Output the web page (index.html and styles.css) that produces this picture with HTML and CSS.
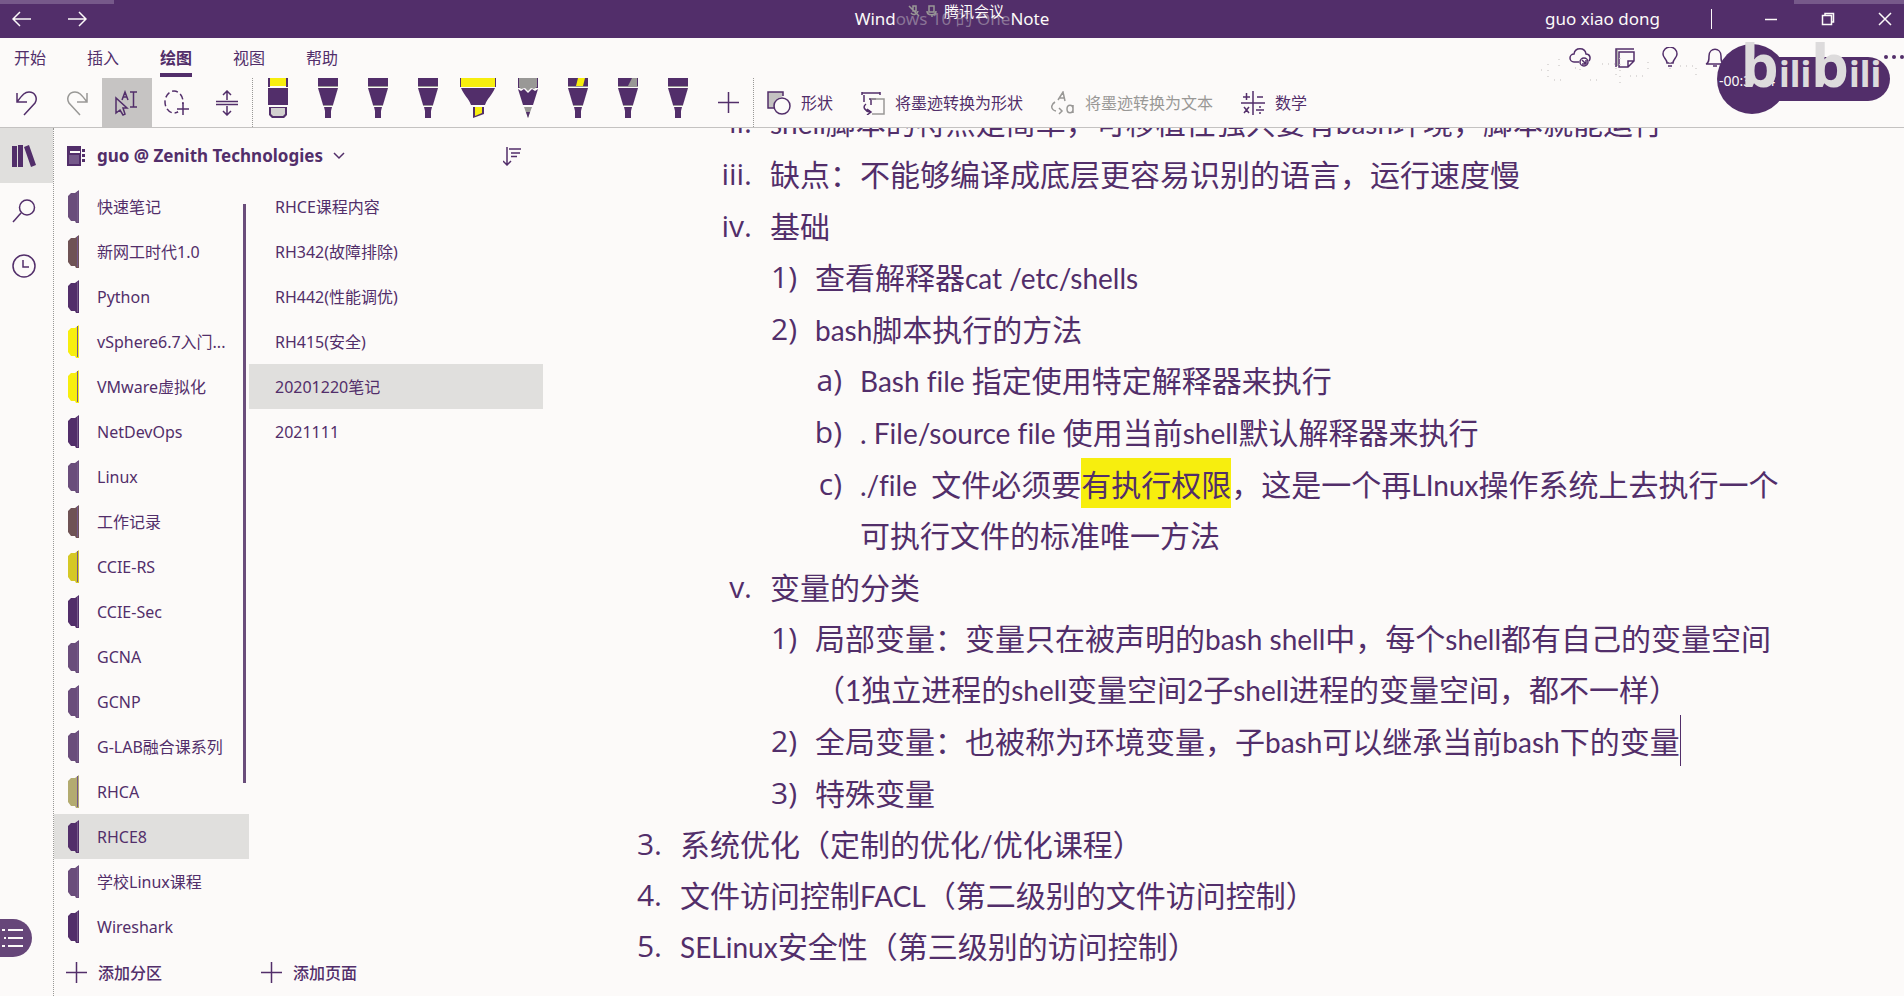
FILE: index.html
```
<!DOCTYPE html>
<html lang="zh-CN">
<head>
<meta charset="utf-8">
<title>Windows 10 的 OneNote</title>
<link rel="stylesheet" href="styles.css">
</head>
<body>
<svg class="defs" aria-hidden="true">
  <symbol id="pen" viewBox="0 0 20 40"><path class="cap" d="M0 0h20v8H0z"/><path class="line" d="M0 8h20v1H0z"/><path d="M0 10h20l-5 17H5z"/><path class="line" d="M5 27h10v1H5z"/><path d="M6 29h8l-1 4v7H7v-7z"/><path class="nib" d="M9 31h2v7H9z"/></symbol>
  <symbol id="tab" viewBox="0 0 12 33"><path d="M12 0v33H9l-1-2H4l-3-4V6l3-3h4z"/><path class="edge" d="M10 1h1v31h-1z"/></symbol>
  <symbol id="plus" viewBox="0 0 21 21"><path d="M10.500 0v21M0 10.500h21" fill="none" stroke="currentColor" stroke-width="1.500"/></symbol>
</svg>

<header class="titlebar">
  <nav class="history">
    <button aria-label="后退"><svg width="20" height="16" viewBox="0 0 20 16"><path d="M19 8H1M8 1L1 8l7 7"/></svg></button>
    <button aria-label="前进"><svg width="20" height="16" viewBox="0 0 20 16"><path d="M1 8h18M12 1l7 7-7 7"/></svg></button>
  </nav>
  <h1>Wind<span class="dim">ows 10 的 One</span>Note</h1>
  <div class="meeting">
    <svg width="32" height="12" viewBox="0 0 32 12"><path d="M2 1l10 10M4 8a4 4 0 0 0 7-2M6 1v5h3V1zM22 1h5v6h-5zM20 6c0 5 9 5 9 0M25 9v3"/></svg>
    <span>腾讯会议</span>
  </div>
  <div class="account">
    <span class="user">guo xiao dong</span>
    <i class="sep"></i>
    <button aria-label="最小化"><svg width="14" height="14" viewBox="0 0 14 14"><path d="M1 7.500h12"/></svg></button>
    <button aria-label="还原"><svg width="14" height="14" viewBox="0 0 14 14"><path d="M1.500 3.500h9v9h-9zM4 3V1.500h8.500V10H11"/></svg></button>
    <button aria-label="关闭"><svg width="14" height="14" viewBox="0 0 14 14"><path d="M1 1l12 12M13 1L1 13"/></svg></button>
  </div>
  <i class="strip left"></i><i class="strip right"></i>
</header>

<div class="tabs">
  <nav>
    <button>开始</button><button>插入</button><button class="active">绘图</button><button>视图</button><button>帮助</button>
  </nav>
  <div class="status">
    <button aria-label="同步"><svg width="22" height="22" viewBox="0 0 22 22"><path d="M10 15H5a4 4 0 0 1 0-8c1-7 11-7 12 0 4 0 5 4 3 7"/><circle cx="15" cy="15" r="4"/><path d="M13 13l4 4M17 13v4h-4"/></svg></button>
    <button aria-label="页面"><svg width="22" height="22" viewBox="0 0 22 22"><path class="faint" d="M3 3v16"/><path d="M2 20V2h18M5 20V5h15v9l-6 6zM14 20v-6h6"/></svg></button>
    <button aria-label="提示"><svg width="22" height="22" viewBox="0 0 22 22"><path d="M8 16c0-4-4-5-4-9a7 7 0 0 1 14 0c0 4-4 5-4 9zM9 19h4"/></svg></button>
    <button aria-label="通知"><svg width="22" height="22" viewBox="0 0 22 22"><path d="M2 17c3-1 3-4 3-8 0-9 12-9 12 0 0 4 0 7 3 8zM9 19h4"/></svg></button>
    <button class="more" aria-label="更多"><svg width="20" height="4" viewBox="0 0 20 4"><circle cx="2" cy="2" r="2"/><circle cx="10" cy="2" r="2"/><circle cx="18" cy="2" r="2"/></svg></button>
  </div>
  <svg class="specks" width="170" height="34" viewBox="0 0 170 34"><path d="M1 16h1M8 10v15M14 26h8M19 5v10M35 14h5v6M50 26h12M62 10h14v12M80 4v25M90 22h18M108 8v8M130 8v12M140 12h16v10"/></svg>
  <div class="badge">
    <i class="disc"></i><i class="bar"></i>
    <span class="clock">-00:3</span><span class="clock end">4</span>
    <span class="logo"><b>b</b>ili<b>b</b>ili</span>
  </div>
</div>

<div class="toolbar">
  <div class="tools">
    <button aria-label="撤消"><svg width="22" height="26" viewBox="0 0 22 26"><path d="M1 3v9h10M1 12C7 4 9 2 13 2c6 0 9 6 6 11L8 25"/></svg></button>
    <button aria-label="恢复" class="off"><svg width="22" height="26" viewBox="0 0 22 26"><path d="M21 3v9H11M21 12C15 4 13 2 9 2 3 2 0 8 3 13l11 12"/></svg></button>
    <button aria-label="选择文本" class="on"><svg width="26" height="26" viewBox="0 0 26 26"><path d="M2 8v15l4-3 3 5 2-1-2-6h4zM16 2h7M16 17h7M19.500 2v15M8 10l3-8 3 8M9 7h4"/></svg></button>
    <button aria-label="套索选择"><svg width="26" height="26" viewBox="0 0 26 26"><ellipse cx="10" cy="12" rx="9" ry="11" stroke-dasharray="6 3"/><path class="gap" d="M14 14h8v8h-8z"/><path d="M19 13v12M13 19h12"/></svg></button>
    <button aria-label="插入空间"><svg width="22" height="26" viewBox="0 0 22 26"><path d="M0 11.500h22M0 14.500h22M11 10V2M7 5l4-4 4 4M11 16v8M7 21l4 4 4-4"/></svg></button>
  </div>
  <div class="pens">
    <button aria-label="橡皮擦"><svg width="20" height="40" viewBox="0 0 20 40"><path class="yellow" d="M0 0h20v8H0z"/><path d="M0 0h2v9H0zM18 0h2v9h-2zM0 10h20v17H0zM1 29h18v8l-3 3H4l-3-3z"/><path class="soft" d="M3 30h14v6l-2 2H5l-2-2z"/></svg></button>
    <button aria-label="笔 1" class="gold"><svg width="20" height="40"><use href="#pen"/></svg></button>
    <button aria-label="笔 2" class="mist"><svg width="20" height="40"><use href="#pen"/></svg></button>
    <button aria-label="笔 3"><svg width="20" height="40"><use href="#pen"/></svg></button>
    <button aria-label="荧光笔"><svg width="36" height="40" viewBox="0 0 36 40"><path d="M0 0h36v9H0z"/><path class="yellow" d="M1 0h34v9H1z"/><path d="M1 10h34c-4 9-7 9-10 17H11C8 19 5 19 1 10z"/><path d="M13 29h11v7l-11 4z"/><path class="yellow" d="M15 29h7v6l-7 3z"/></svg></button>
    <button aria-label="铅笔"><svg width="20" height="40" viewBox="0 0 20 40"><path d="M0 0h20v10H0z"/><path class="grey" d="M1 0h18v9l-3 2-3-1-3 3-3-3-4 1-2-2z"/><path d="M0 11l3 2 3-2 4 4 4-4 3 2 3-2-5 16H5z"/><path class="grey" d="M6 29h8l-4 11z"/><path d="M8 34h4l-2 6z"/></svg></button>
    <button aria-label="笔 4" class="half"><svg width="20" height="40"><use href="#pen"/><path class="yellow" d="M10 0h7l-2 8H8z"/></svg></button>
    <button aria-label="笔 5" class="half"><svg width="20" height="40"><use href="#pen"/><path class="grey" d="M14 0h5v8h-9z"/></svg></button>
    <button aria-label="笔 6"><svg width="20" height="40"><use href="#pen"/></svg></button>
    <button aria-label="添加笔"><svg width="21" height="21"><use href="#plus"/></svg></button>
  </div>
  <div class="convert">
    <button><svg width="24" height="24" viewBox="0 0 24 24"><path class="tint" d="M1 1h15v4L8 9v8H1z"/><path d="M7 17H1V1h15v4"/><ellipse cx="15" cy="15" rx="8" ry="8"/></svg>形状</button>
    <button><svg width="24" height="24" viewBox="0 0 24 24"><path d="M1 1v3M1 2h18M19 1v3M3 4v7M8 8h7M5 13c-4 3-1 7 4 8M6 18l4 3-4 3M10 14V8"/><path class="faint" d="M10 8h13v15H11"/></svg>将墨迹转换为形状</button>
    <button class="off"><svg width="24" height="24" viewBox="0 0 24 24"><path d="M7 9l5-8 2 9M9 7h4M4 11c-5 3-4 8 1 9M8 17l3 3-3 3M22 14v8M22 18c0-5-6-5-6 0s6 5 6 0"/></svg>将墨迹转换为文本</button>
    <button><svg width="24" height="24" viewBox="0 0 24 24"><path d="M0 12h24M12 0v24M2 6h7M5.500 2v7M16 6h6M3 16l5 6M8 16l-5 6M15 19h8M19 15v2M19 21v2"/></svg>数学</button>
  </div>
</div>

<main class="workspace">
  <nav class="rail">
    <button class="on" aria-label="笔记本"><svg class="solid" width="24" height="22" viewBox="0 0 24 22"><path d="M0 1h5v21H0zM6 0h5v22H6zM12 2l5-2 7 20-5 2z"/></svg></button>
    <button aria-label="搜索"><svg width="24" height="24" viewBox="0 0 24 24"><circle cx="15" cy="8.500" r="7.500"/><path d="M9 14l-8 9"/></svg></button>
    <button aria-label="最近的笔记"><svg width="24" height="24" viewBox="0 0 24 24"><circle cx="12" cy="12" r="11"/><path d="M11 6v7h6"/></svg></button>
  </nav>

  <div class="lists">
    <div class="notebook">
      <button class="name">
        <svg class="solid" width="19" height="20" viewBox="0 0 19 20"><path d="M0 0h14v20H0zM15 3h3v3h-3zM15 8h3v3h-3zM15 13h3v3h-3z"/><path class="paper" d="M3 5h10v2H3z"/><path class="veil" d="M2 9h10v9H2z"/></svg>
        <span>guo @ Zenith Technologies</span>
        <svg width="12" height="8" viewBox="0 0 12 8"><path d="M1 1l5 5 5-5"/></svg>
      </button>
      <button aria-label="排序"><svg width="19" height="19" viewBox="0 0 19 19"><path d="M4 0v18M0 14l4 4 4-4M6 2h12M8 6h9M8 9.500h6"/></svg></button>
    </div>
    <div class="columns">
      <div class="sections">
        <ul>
          <li><button class="c1"><svg width="12" height="33"><use href="#tab"/></svg><span>快速笔记</span></button></li>
          <li><button class="c2"><svg width="12" height="33"><use href="#tab"/></svg><span>新网工时代1.0</span></button></li>
          <li><button class="c0"><svg width="12" height="33"><use href="#tab"/></svg><span>Python</span></button></li>
          <li><button class="c3"><svg width="12" height="33"><use href="#tab"/></svg><span>vSphere6.7入门...</span></button></li>
          <li><button class="c3"><svg width="12" height="33"><use href="#tab"/></svg><span>VMware虚拟化</span></button></li>
          <li><button class="c0"><svg width="12" height="33"><use href="#tab"/></svg><span>NetDevOps</span></button></li>
          <li><button class="c1"><svg width="12" height="33"><use href="#tab"/></svg><span>Linux</span></button></li>
          <li><button class="c2"><svg width="12" height="33"><use href="#tab"/></svg><span>工作记录</span></button></li>
          <li><button class="c4"><svg width="12" height="33"><use href="#tab"/></svg><span>CCIE-RS</span></button></li>
          <li><button class="c0"><svg width="12" height="33"><use href="#tab"/></svg><span>CCIE-Sec</span></button></li>
          <li><button class="c1"><svg width="12" height="33"><use href="#tab"/></svg><span>GCNA</span></button></li>
          <li><button class="c1"><svg width="12" height="33"><use href="#tab"/></svg><span>GCNP</span></button></li>
          <li><button class="c1"><svg width="12" height="33"><use href="#tab"/></svg><span>G-LAB融合课系列</span></button></li>
          <li><button class="c5"><svg width="12" height="33"><use href="#tab"/></svg><span>RHCA</span></button></li>
          <li><button class="c0 on"><svg width="12" height="33"><use href="#tab"/></svg><span>RHCE8</span></button></li>
          <li><button class="c1"><svg width="12" height="33"><use href="#tab"/></svg><span>学校Linux课程</span></button></li>
          <li><button class="c0"><svg width="12" height="33"><use href="#tab"/></svg><span>Wireshark</span></button></li>
        </ul>
        <i class="thumb"></i>
        <button class="add"><svg width="21" height="21"><use href="#plus"/></svg>添加分区</button>
      </div>
      <div class="pages">
        <ul>
          <li><button>RHCE课程内容</button></li>
          <li><button>RH342(故障排除)</button></li>
          <li><button>RH442(性能调优)</button></li>
          <li><button>RH415(安全)</button></li>
          <li><button class="on">20201220笔记</button></li>
          <li><button>2021111</button></li>
        </ul>
        <button class="add"><svg width="21" height="21"><use href="#plus"/></svg>添加页面</button>
      </div>
    </div>
  </div>

  <article class="note">
    <div class="roman">
      <div class="item"><span class="mark">ii.</span><p><span class="en">shell</span>脚本的特点是简单，可移植性强只要有<span class="en">bash</span>环境，脚本就能运行</p></div>
      <div class="item"><span class="mark">iii.</span><p>缺点：不能够编译成底层更容易识别的语言，运行速度慢</p></div>
      <div class="item"><span class="mark">iv.</span><div><p>基础</p>
        <div class="item"><span class="mark">1)</span><p>查看解释器<span class="en">cat /etc/shells</span></p></div>
        <div class="item"><span class="mark">2)</span><div><p><span class="en">bash</span>脚本执行的方法</p>
          <div class="item"><span class="mark">a)</span><p><span class="en">Bash file </span>指定使用特定解释器来执行</p></div>
          <div class="item"><span class="mark">b)</span><p><span class="en">. File/source file </span>使用当前<span class="en">shell</span>默认解释器来执行</p></div>
          <div class="item"><span class="mark">c)</span><p><span class="en">./file&nbsp; </span>文件必须要<mark>有执行权限</mark>，这是一个再<span class="en">LInux</span>操作系统上去执行一个<br>可执行文件的标准唯一方法</p></div>
        </div></div>
      </div></div>
      <div class="item"><span class="mark">v.</span><div><p>变量的分类</p>
        <div class="item"><span class="mark">1)</span><p>局部变量：变量只在被声明的<span class="en">bash shell</span>中，每个<span class="en">shell</span>都有自己的变量空间<br>（<span class="en">1</span>独立进程的<span class="en">shell</span>变量空间<span class="en">2</span>子<span class="en">shell</span>进程的变量空间，都不一样）</p></div>
        <div class="item"><span class="mark">2)</span><p>全局变量：也被称为环境变量，子<span class="en">bash</span>可以继承当前<span class="en">bash</span>下的变量<i class="caret"></i></p></div>
        <div class="item"><span class="mark">3)</span><p>特殊变量</p></div>
      </div></div>
    </div>
    <div class="item"><span class="mark">3.</span><p>系统优化（定制的优化<span class="en">/</span>优化课程）</p></div>
    <div class="item"><span class="mark">4.</span><p>文件访问控制<span class="en">FACL</span>（第二级别的文件访问控制）</p></div>
    <div class="item"><span class="mark">5.</span><p><span class="en">SELinux</span>安全性（第三级别的访问控制）</p></div>
  </article>
  <button class="float" aria-label="目录"><svg width="24" height="20" viewBox="0 0 24 20"><path d="M8 2h15M8 10h15M8 18h15M2 2h3M4 10h2M2 18h3"/></svg></button>
</main>
</body>
</html>
```
FILE: styles.css
```
:root {
  --ink: #522e6a;
  --paper: #fcfaf9;
  --grey: #999896;
  --yellow: #f7ee0e;
  --selected: #e0dfdd;
}
* { box-sizing: border-box; }
html, body { height: 100%; }
body {
  margin: 0;
  display: flex;
  flex-direction: column;
  overflow: hidden;
  background: var(--paper);
  color: var(--ink);
  font: 16px/24px "Noto Sans", "Noto Sans CJK SC", sans-serif;
}
button {
  border: 0;
  padding: 0;
  background: none;
  color: inherit;
  font: inherit;
  display: flex;
  align-items: center;
  white-space: nowrap;
}
svg { flex: none; display: block; fill: none; stroke: currentColor; stroke-width: 1.5; }
ul { list-style: none; margin: 0; padding: 0; }
p { margin: 0; }
.defs { position: absolute; width: 0; height: 0; }
.solid { fill: currentColor; stroke: none; }
.faint { stroke: var(--grey); }

.titlebar {
  position: relative;
  flex: none;
  height: 38px;
  background: var(--ink);
  color: var(--paper);
  display: grid;
  grid-template-columns: 1fr auto 1fr;
  align-items: center;
}
.history { display: flex; gap: 35px; padding-left: 12px; }
.titlebar h1 { margin: 0; font-size: 17px; font-weight: 400; }
.dim { color: #8a7597; }
.meeting {
  position: absolute;
  left: 907px;
  top: 1px;
  display: flex;
  align-items: center;
  gap: 5px;
  font-size: 15px;
  line-height: 20px;
}
.meeting svg { color: var(--grey); }
.account { display: flex; align-items: center; justify-content: flex-end; padding-right: 12px; }
.user { font-size: 17px; }
.sep { width: 1px; height: 20px; background: var(--paper); margin: 0 52px 0 51px; }
.account button + button { margin-left: 43px; }
.strip { position: absolute; top: 0; height: 4px; background: #76598a; }
.strip.left { left: 0; width: 114px; }
.strip.right { right: 0; width: 110px; }

.tabs { position: relative; flex: none; height: 40px; display: flex; justify-content: space-between; }
.tabs nav { display: flex; gap: 41px; padding-left: 14px; }
.tabs nav button { border-bottom: 4px solid transparent; height: 39px; padding-top: 4px; }
.tabs nav .active { border-color: var(--ink); font-weight: 700; }
.status { display: flex; align-items: flex-start; gap: 23px; padding-top: 9px; }
.status .more { padding-top: 8px; margin-left: 135px; }
.more svg { fill: currentColor; stroke: none; }
.specks { position: absolute; right: 194px; top: 16px; color: #d3d1cf; stroke-dasharray: 1 5; }
.badge { position: absolute; right: 14px; top: 6px; width: 173px; height: 70px; z-index: 2; color: var(--paper); }
.disc { position: absolute; left: 0; top: 0; width: 70px; height: 70px; border-radius: 50%; background: var(--ink); }
.bar { position: absolute; left: 35px; right: 0; top: 13px; height: 44px; border-radius: 0 22px 22px 0; background: var(--ink); }
.clock { position: absolute; left: 2px; top: 25px; font-size: 14px; }
.clock.end { left: 50px; }
.logo { position: absolute; left: 24px; top: -20px; font-size: 36px; line-height: 80px; font-weight: 700; color: #dddbdc; white-space: nowrap; }
.logo b { font-size: 60px; font-weight: 700; }

.toolbar {
  flex: none;
  height: 50px;
  display: flex;
  border-bottom: 1px solid #c4c2c1;
}
.tools, .pens, .convert { display: flex; }
.tools { padding-left: 2px; }
.tools button { width: 50px; justify-content: center; }
.pens { border-left: 1px dotted var(--grey); border-right: 1px dotted var(--grey); }
.pens button { width: 50px; justify-content: center; align-items: flex-start; }
.pens svg { fill: currentColor; stroke: none; }
.pens button:last-child { align-items: center; }
.tools .on { background: #c6c4c3; }
.off { color: var(--grey); }
.gap { fill: var(--paper); stroke: none; }
.yellow { fill: var(--yellow); }
.grey { fill: var(--grey); }
.soft { fill: #d2d0cf; }
.line { fill: var(--grey); }
.cap, .nib { fill: currentColor; }
.gold .cap { fill: #7c6252; }
.mist .cap { fill: #634676; }
.half .nib { fill: var(--grey); }
.convert { padding-left: 13px; gap: 28px; }
.convert button { gap: 10px; }
.tint { fill: #c4c2c1; stroke: none; }

.workspace { position: relative; flex: 1; min-height: 0; display: flex; }
.rail { flex: none; width: 54px; border-right: 1px dotted var(--grey); }
.rail button { width: 53px; height: 55px; justify-content: center; padding-right: 5px; }
.rail .on { background: var(--selected); }

.lists { flex: none; width: 489px; display: flex; flex-direction: column; }
.notebook { flex: none; height: 56px; display: flex; align-items: center; justify-content: space-between; padding: 0 21px 0 13px; }
.name { font-size: 17px; font-weight: 700; }
.name span { margin: 0 10px 0 11px; }
.paper { fill: var(--paper); }
.veil { fill: #75598a; }
.columns { flex: 1; min-height: 0; display: flex; }
.sections { position: relative; width: 195px; display: flex; flex-direction: column; }
.pages { flex: 1; display: flex; flex-direction: column; }
.columns ul { flex: 1; min-height: 0; overflow: hidden; }
.columns li button { width: 100%; height: 45px; padding-left: 13px; gap: 18px; }
.pages li button { padding-left: 26px; }
.columns li .on { background: var(--selected); }
.columns li svg { fill: currentColor; stroke: none; }
.columns li span { color: var(--ink); }
.edge { fill: #75598a; }
.c0 { color: var(--ink); }
.c1 { color: #6a4d7b; }
.c2 { color: #6f5355; }
.c3 { color: #f7ee0e; }
.c4 { color: #d5c826; }
.c5 { color: #b3ab70; }
.thumb { position: absolute; right: 3px; top: 20px; bottom: 213px; width: 3px; background: #6a4d7b; }
.add { flex: none; height: 47px; gap: 11px; padding-left: 12px; font-weight: 500; }

.note { flex: 1; min-width: 0; overflow: hidden; padding-left: 92px; font-size: 30px; line-height: 51px; white-space: nowrap; }
.roman { margin-top: -32px; padding-left: 90px; }
.item { display: flex; }
.roman .item + .item { margin-top: 1px; }
.mark { flex: none; width: 45px; padding-right: 18px; display: flex; justify-content: flex-end; font-family: "Open Sans", sans-serif; }
.note p { font-family: "Noto Sans CJK SC", sans-serif; }
.note .en { font-family: Lato, sans-serif; font-size: 28px; line-height: 1; font-variant-ligatures: none; }
mark { display: inline-block; height: 50px; line-height: 50px; vertical-align: top; background: var(--yellow); color: inherit; }
.caret { display: inline-block; width: 1px; height: 51px; vertical-align: top; background: var(--ink); }

.float {
  position: absolute;
  left: 0;
  bottom: 39px;
  width: 32px;
  height: 38px;
  border-radius: 0 19px 19px 0;
  background: #664679;
  color: var(--paper);
}
.float svg { stroke-width: 2; }
```
